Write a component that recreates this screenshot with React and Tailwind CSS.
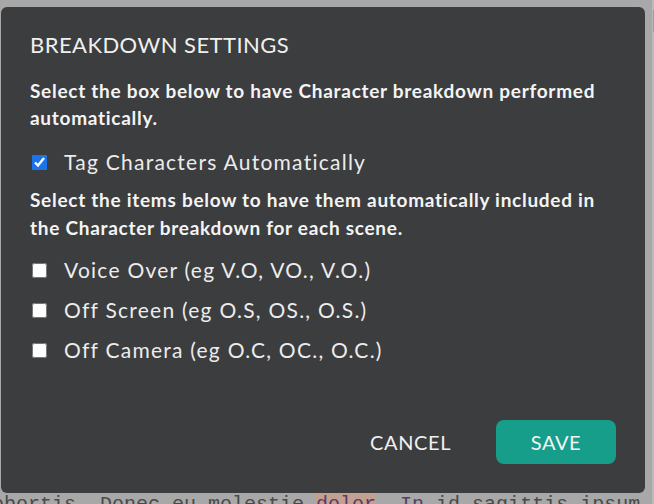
import { useState } from 'react';

const font = { fontFamily: 'Lato, "Noto Sans", sans-serif' };

function Option({ label, checked, onChange }) {
  return (
    <label className="flex items-center h-[40px] cursor-pointer">
      <input
        type="checkbox"
        checked={checked}
        onChange={onChange}
        className="w-[15px] h-[15px] ml-[2px] m-0 accent-[#1a73e8]"
      />
      <span className="ml-[17px] text-[21px] tracking-[1.25px] text-[#ececec]">{label}</span>
    </label>
  );
}

export default function App() {
  const [tagAuto, setTagAuto] = useState(true);
  const [opts, setOpts] = useState({ vo: false, os: false, oc: false });

  const toggle = (k) => setOpts(prev => ({ ...prev, [k]: !prev[k] }));

  return (
    <div className="relative w-[654px] h-[504px] overflow-hidden bg-[#a8a8a8]" style={font}>
      {/* page behind the backdrop */}
      <div className="flex h-full">
        <div className="flex-1 flex flex-col justify-end">
          <p className="ml-[-20px] mb-[-13px] whitespace-nowrap text-[20px] leading-[24px] text-[#4a4a4a]" style={{ fontFamily: '"Liberation Mono", monospace' }}>
            lobortis. Donec eu molestie <span className="bg-[#c4a092] text-[#5a3c6a]">dolor</span>, <span className="text-[#5a3c6a]">In</span> id sagittis ipsum.
          </p>
        </div>
        <div className="w-[9px] bg-[#b9b9b9] pt-[10px] pl-[1px]">
          <div className="w-[6px] h-[22px] bg-[#9d9d9d]" />
        </div>
      </div>

      {/* dialog */}
      <div className="absolute left-[1px] top-[7px] w-[644px] h-[486px] rounded-[6px] bg-[#3c3d3f] px-[29px] pt-[25px] flex flex-col">
        <h2 className="text-[22px] leading-[26px] tracking-[0.45px] text-[#f0f0f0]">BREAKDOWN SETTINGS</h2>

        <p className="mt-[19px] text-[19px] leading-[27px] tracking-[0.72px] font-bold text-[#f4f4f4]">
          Select the box below to have Character breakdown performed automatically.
        </p>

        <div className="mt-[11px]">
          <Option label="Tag Characters Automatically" checked={tagAuto} onChange={() => setTagAuto(v => !v)} />
        </div>

        <p className="mt-[4px] text-[19px] leading-[28px] tracking-[0.72px] font-bold text-[#f4f4f4]">
          Select the items below to have them automatically included in the Character breakdown for each scene.
        </p>

        <div className="mt-[8px] flex flex-col">
          <Option label="Voice Over (eg V.O, VO., V.O.)" checked={opts.vo} onChange={() => toggle('vo')} />
          <Option label="Off Screen (eg O.S, OS., O.S.)" checked={opts.os} onChange={() => toggle('os')} />
          <Option label="Off Camera (eg O.C, OC., O.C.)" checked={opts.oc} onChange={() => toggle('oc')} />
        </div>

        <div className="mt-auto mb-[29px] flex items-center justify-end gap-[45px]">
          <button className="text-[20px] tracking-[0.6px] text-[#f0f0f0]">CANCEL</button>
          <button className="w-[120px] h-[44px] rounded-[8px] bg-[#179e8b] text-[20px] tracking-[0.6px] text-[#f4f4f4]">SAVE</button>
        </div>
      </div>
    </div>
  );
}
